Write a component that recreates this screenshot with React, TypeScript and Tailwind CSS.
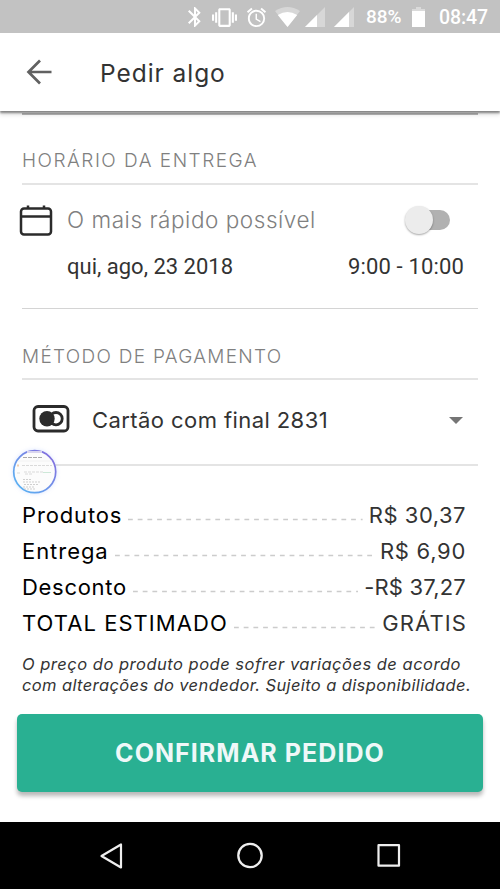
import { MdAlarm, MdBluetooth, MdVibration } from 'react-icons/md'

const totals = [
  { label: 'Produtos', value: 'R$ 30,37', labelStyle: 'tracking-[0.850px]', valueStyle: 'tracking-[0.500px]' },
  { label: 'Entrega', value: 'R$ 6,90', labelStyle: 'tracking-[0.950px]', valueStyle: 'tracking-[0.700px]' },
  { label: 'Desconto', value: '-R$ 37,27', labelStyle: 'tracking-[0.700px]', valueStyle: 'tracking-[0.200px]' },
  { label: 'TOTAL ESTIMADO', value: 'GRÁTIS', labelStyle: 'tracking-[1.050px]', valueStyle: 'tracking-[1.100px] -mr-px' }
]

function StatusBar() {
  return (
    <div className="flex h-[33px] items-center bg-[#c2c2c2] pl-[183px] pt-px font-['Roboto',sans-serif] font-medium text-white">
      <MdBluetooth className="size-6 shrink-0" />
      <MdVibration className="ml-[5px] size-[25px] shrink-0" />
      <MdAlarm className="ml-2 size-[23px] shrink-0" />
      <svg className="ml-[7px] shrink-0" width="25" height="20" viewBox="0 0 25 20">
        <path d="M0 4Q12.500-4 25 4L12.500 20Z" fill="white" fillOpacity=".35" />
        <path d="M2.800 8Q12.500 2 22.200 8L12.500 20Z" fill="white" />
      </svg>
      <svg className="ml-[5px] shrink-0" width="20" height="20" viewBox="0 0 20 20">
        <path d="M0 20L20 0V20Z" fill="white" fillOpacity=".35" />
        <path d="M0 20L12 8V20Z" fill="white" />
      </svg>
      <svg className="ml-[9px] shrink-0" width="20" height="20" viewBox="0 0 20 20">
        <path d="M0 20L20 0V20Z" fill="white" fillOpacity=".35" />
        <path d="M0 20L15 5V20Z" fill="white" />
      </svg>
      <span className="ml-[12px] w-[46px] pt-px text-[19px]">88%</span>
      <svg className="shrink-0" width="13" height="20" viewBox="0 0 13 20">
        <path d="M0 4V2H4V0H9V2H13V4Z" fill="white" fillOpacity=".4" />
        <path d="M0 4H13V20H0Z" fill="white" />
      </svg>
      <span className="ml-[14px] pt-[2px] text-[19.500px] tracking-[-0.100px]">08:47</span>
    </div>
  )
}

export default function App() {
  return (
    <div className="flex h-[889px] w-[500px] flex-col overflow-hidden bg-white font-['Inter',sans-serif] text-[#333]">
      <StatusBar />

      {/* App bar */}
      <header className="z-10 flex h-[78px] shrink-0 items-center bg-white pl-[26px] shadow-[0_2px_2px_rgba(0,0,0,0.42),0_4px_4px_rgba(0,0,0,0.12)]">
        <svg width="26" height="26" viewBox="0 0 26 26" fill="none" stroke="#616161" strokeWidth="2.700">
          <path d="M25.500 13H2.500M14 1.500L2.500 13L14 24.500" />
        </svg>
        <h1 className="ml-[48px] pt-[2px] text-[24.500px] tracking-[0.950px]">Pedir algo</h1>
      </header>

      <main className="flex grow flex-col">
        {/* Delivery time */}
        <section className="mx-[22px] h-[198px] border-b border-[#d4d4d4] pt-[2px]">
          <div className="flex h-[72px] items-end border-b-2 border-t-2 border-b-[#e4e4e4] border-t-[#bbb] pb-[8px]">
            <h2 className="text-[19px] font-light tracking-[1.500px] text-[#808080]">HORÁRIO DA ENTREGA</h2>
          </div>
          <div className="-ml-[3px] mt-[14px] flex h-[42px] items-center">
            <svg width="34" height="32" viewBox="0 0 34 32" fill="none" stroke="#2b2b2b" strokeWidth="2.500">
              <rect x="2" y="4.500" width="30" height="26" rx="3" />
              <path d="M2 12.500H32M9 1.500V5M25 1.500V5" />
            </svg>
            <span className="ml-[14px] text-[22.500px] font-light tracking-[0.550px] text-[#808080]">O mais rápido possível</span>
            <button className="ml-auto mr-[28px] flex h-5 w-[38px] items-center rounded-full bg-[#b1b1b1]">
              <span className="-ml-[7px] size-7 shrink-0 rounded-full bg-[#ececec] shadow-[0_1px_2px_rgba(0,0,0,0.35)]" />
            </button>
          </div>
          <div className="ml-[45px] mr-[14px] mt-[10px] flex justify-between font-['Roboto',sans-serif] text-[22px] leading-[32px]">
            <span>qui, ago, 23 2018</span>
            <span className="tracking-[0.150px]">9:00 - 10:00</span>
          </div>
        </section>

        {/* Payment */}
        <section className="relative mx-[22px] h-[157px] border-b-2 border-[#e4e4e4]">
          <div className="flex h-[71px] items-end border-b-2 border-[#e4e4e4] pb-[7px]">
            <h2 className="text-[19px] font-light tracking-[1.280px] text-[#808080]">MÉTODO DE PAGAMENTO</h2>
          </div>
          <div className="flex h-[78px] items-center pl-[10px]">
            <svg className="mb-px" width="38" height="28" viewBox="0 0 38 28" fill="none" stroke="#2b2b2b" strokeWidth="2.800">
              <rect x="2" y="1.500" width="34" height="24.500" rx="4" />
              <circle cx="15" cy="13.700" r="7.700" fill="#2b2b2b" stroke="none" />
              <circle cx="24" cy="13.700" r="6.200" />
            </svg>
            <span className="ml-[22px] pt-[2px] text-[22px] tracking-[0.420px]">Cartão com final 2831</span>
            <svg className="ml-auto mr-[15px] mt-[2px]" width="14" height="7" viewBox="0 0 14 7">
              <path d="M0 0H14L7 7Z" fill="#757575" />
            </svg>
          </div>
          {/* Floating screen bubble */}
          <svg className="absolute -left-[12px] top-[138px] drop-shadow-[0_0_2px_rgba(110,150,255,0.25)]" width="48" height="48" viewBox="0 0 48 48">
            <defs>
              <linearGradient id="ring" x1="0" y1="1" x2="1" y2="0">
                <stop offset="0" stopColor="#55baf5" />
                <stop offset="1" stopColor="#8967dc" />
              </linearGradient>
            </defs>
            <circle cx="24.700" cy="24.700" r="21" fill="#fcfcfc" stroke="url(#ring)" strokeWidth="1.700" />
            <g fill="none" stroke="#bbb" strokeWidth=".7">
              <path d="M17 5H32" stroke="#d9d5ee" strokeWidth="2" />
              <path d="M13 10.500H33" stroke="#888" strokeDasharray="4 1" />
              <path d="M8 14H42" stroke="#eee" />
              <path d="M12 18.500H42M14 25H33M15 27H22M7 26H10" stroke="#ccc" strokeDasharray="3 1" />
              <path d="M13 32.500H22M13 35H31M14 37.500H29M13 40H25M14 42H26" strokeDasharray="2 1" />
              <path d="M7 18.500H9" stroke="#efcfb4" strokeWidth="2" />
              <path d="M33 25.500H41" stroke="#b9dfc8" />
            </g>
          </svg>
        </section>

        {/* Totals */}
        <dl className="ml-[22px] mr-[34px] mt-[31px] text-[22px] leading-[36px]">
          {totals.map((item) => (
            <div key={item.label} className="flex h-9">
              <dt className={`text-black ${item.labelStyle}`}>{item.label}</dt>
              <svg className="ml-[6px] mr-[6px] h-9 min-w-0 flex-1">
                <line x1="0" y1="22.500" x2="100%" y2="22.500" stroke="#ccc" strokeWidth="1.600" strokeDasharray="4.800 4.900" />
              </svg>
              <dd className={item.valueStyle}>{item.value}</dd>
            </div>
          ))}
        </dl>

        <p className="ml-[22px] mt-[13px] whitespace-nowrap text-[16.500px] italic leading-[20.500px]">
          <span className="block tracking-[0.500px]">O preço do produto pode sofrer variações de acordo</span>
          <span className="block tracking-[0.380px]">com alterações do vendedor. Sujeito a disponibilidade.</span>
        </p>

        <button className="mx-[17px] mt-[19px] h-[78px] rounded-[5px] bg-[#29b092] pt-px text-[25px] font-bold tracking-[1.050px] text-[#eff8f8] shadow-[0_4px_4px_rgba(0,0,0,0.28)]">
          CONFIRMAR PEDIDO
        </button>
      </main>

      {/* System navigation */}
      <nav className="flex h-[67px] shrink-0 items-center justify-between bg-black pl-[98px] pr-[98px]">
        <svg width="27" height="28" viewBox="0 0 27 28" fill="none" stroke="#eee" strokeWidth="2.200" strokeLinejoin="round">
          <path d="M23 2.500V25.500L3.500 14Z" />
        </svg>
        <svg width="27" height="27" viewBox="0 0 27 27" fill="none" stroke="#eee" strokeWidth="2.300">
          <circle cx="13" cy="13.500" r="11.700" />
        </svg>
        <svg width="27" height="27" viewBox="0 0 27 27" fill="none" stroke="#eee" strokeWidth="2.200" strokeLinejoin="round">
          <rect x="3.500" y="3.200" width="20.500" height="20.500" />
        </svg>
      </nav>
    </div>
  )
}
